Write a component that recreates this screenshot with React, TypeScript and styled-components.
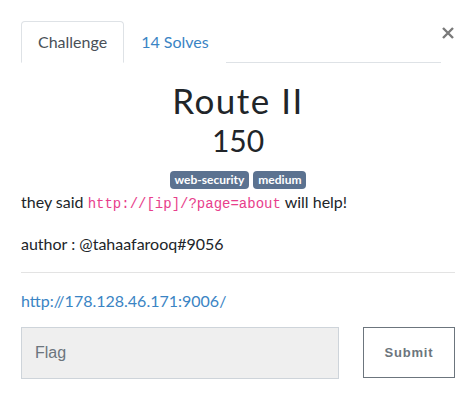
import React, { useState } from 'react';
import styled, { createGlobalStyle } from 'styled-components';

const GlobalStyle = createGlobalStyle`
  html, body {
    margin: 0;
    padding: 0;
    background: #ffffff;
    font-family: Lato, "Noto Sans", "Liberation Sans", sans-serif;
    color: #212529;
  }
  * { box-sizing: border-box; }
`;

const Modal = styled.div`
  width: 470px;
  padding: 21px 15px 0 21px;
`;

const Header = styled.div`
  display: flex;
  align-items: flex-start;
`;

const Tabs = styled.nav`
  flex: 1;
  display: flex;
  border-bottom: 1px solid #dee2e6;
  height: 42px;
`;

const Tab = styled.a<{ $active?: boolean }>`
  display: block;
  height: 42px;
  padding: 10px 16px 0 16px;
  font-size: 16px;
  line-height: 20px;
  text-decoration: none;
  color: ${(p) => (p.$active ? '#495057' : '#3a84c4')};
  border: 1px solid ${(p) => (p.$active ? '#dee2e6' : 'transparent')};
  border-bottom-color: ${(p) => (p.$active ? '#ffffff' : 'transparent')};
  border-radius: 4px 4px 0 0;
  background: #fff;
  cursor: pointer;
`;

const Close = styled.button`
  width: 14px;
  height: 14px;
  margin: 5px 0 0 0;
  padding: 0;
  border: none;
  background: none;
  cursor: pointer;
`;

const Title = styled.h2`
  margin: 16px 0 0;
  text-align: center;
  font-weight: 400;
  font-size: 35px;
  line-height: 42px;
  letter-spacing: 1.5px;
  color: #212529;
`;

const Value = styled.h3`
  margin: 0;
  text-align: center;
  font-weight: 400;
  font-size: 30px;
  line-height: 38px;
`;

const Tags = styled.div`
  display: flex;
  justify-content: center;
  gap: 4px;
  margin-top: 12px;
`;

const Badge = styled.span`
  display: inline-block;
  background: #5b7290;
  color: #fff;
  font-size: 12px;
  font-weight: 700;
  line-height: 18px;
  padding: 0 5px;
  border-radius: 4px;
`;

const Description = styled.div`
  font-size: 16px;
  line-height: 24px;
  margin-top: 1px;
`;

const Para = styled.p`
  margin: 0 0 16px;
`;

const Code = styled.code`
  font-family: "Liberation Mono", "DejaVu Sans Mono", monospace;
  font-size: 14px;
  color: #e83e8c;
`;

const Rule = styled.hr`
  border: none;
  border-top: 1px solid #e3e3e3;
  margin: 14px 0 0;
`;

const Link = styled.a`
  display: block;
  margin-top: 16px;
  font-size: 16px;
  line-height: 24px;
  color: #3a84c4;
  text-decoration: none;
`;

const SubmitRow = styled.form`
  display: flex;
  gap: 24px;
  margin-top: 14px;
`;

const FlagInput = styled.input`
  flex: 0 0 318px;
  height: 52px;
  padding: 0 13px;
  background: #efefef;
  border: 1px solid #ced4da;
  font-family: "Liberation Sans", Arial, sans-serif;
  font-size: 16px;
  color: #495057;
  outline: none;
  &::placeholder { color: #6c757d; }
`;

const SubmitButton = styled.button`
  width: 92px;
  height: 51px;
  background: #fff;
  border: 1px solid #6c757d;
  color: #6c757d;
  font-family: "Liberation Sans", Arial, sans-serif;
  font-weight: 700;
  font-size: 13px;
  letter-spacing: 0.8px;
  cursor: pointer;
`;

export default function App() {
  const [flag, setFlag] = useState('');
  return (
    <>
      <GlobalStyle />
      <Modal>
        <Header>
          <Tabs>
            <Tab $active>Challenge</Tab>
            <Tab>14 Solves</Tab>
          </Tabs>
          <Close aria-label="Close">
            <svg width="14" height="14" viewBox="0 0 14 14">
              <path d="M2 2 L12 12 M12 2 L2 12" stroke="#7a7a7a" strokeWidth="2.4" />
            </svg>
          </Close>
        </Header>
        <Title>Route II</Title>
        <Value>150</Value>
        <Tags>
          <Badge>web-security</Badge>
          <Badge>medium</Badge>
        </Tags>
        <Description>
          <Para>
            they said <Code>http://[ip]/?page=about</Code> will help!
          </Para>
          <Para>author : @tahaafarooq#9056</Para>
        </Description>
        <Rule />
        <Link href="#">http://178.128.46.171:9006/</Link>
        <SubmitRow onSubmit={(e) => e.preventDefault()}>
          <FlagInput placeholder="Flag" value={flag} onChange={(e) => setFlag(e.target.value)} />
          <SubmitButton type="submit">Submit</SubmitButton>
        </SubmitRow>
      </Modal>
    </>
  );
}
